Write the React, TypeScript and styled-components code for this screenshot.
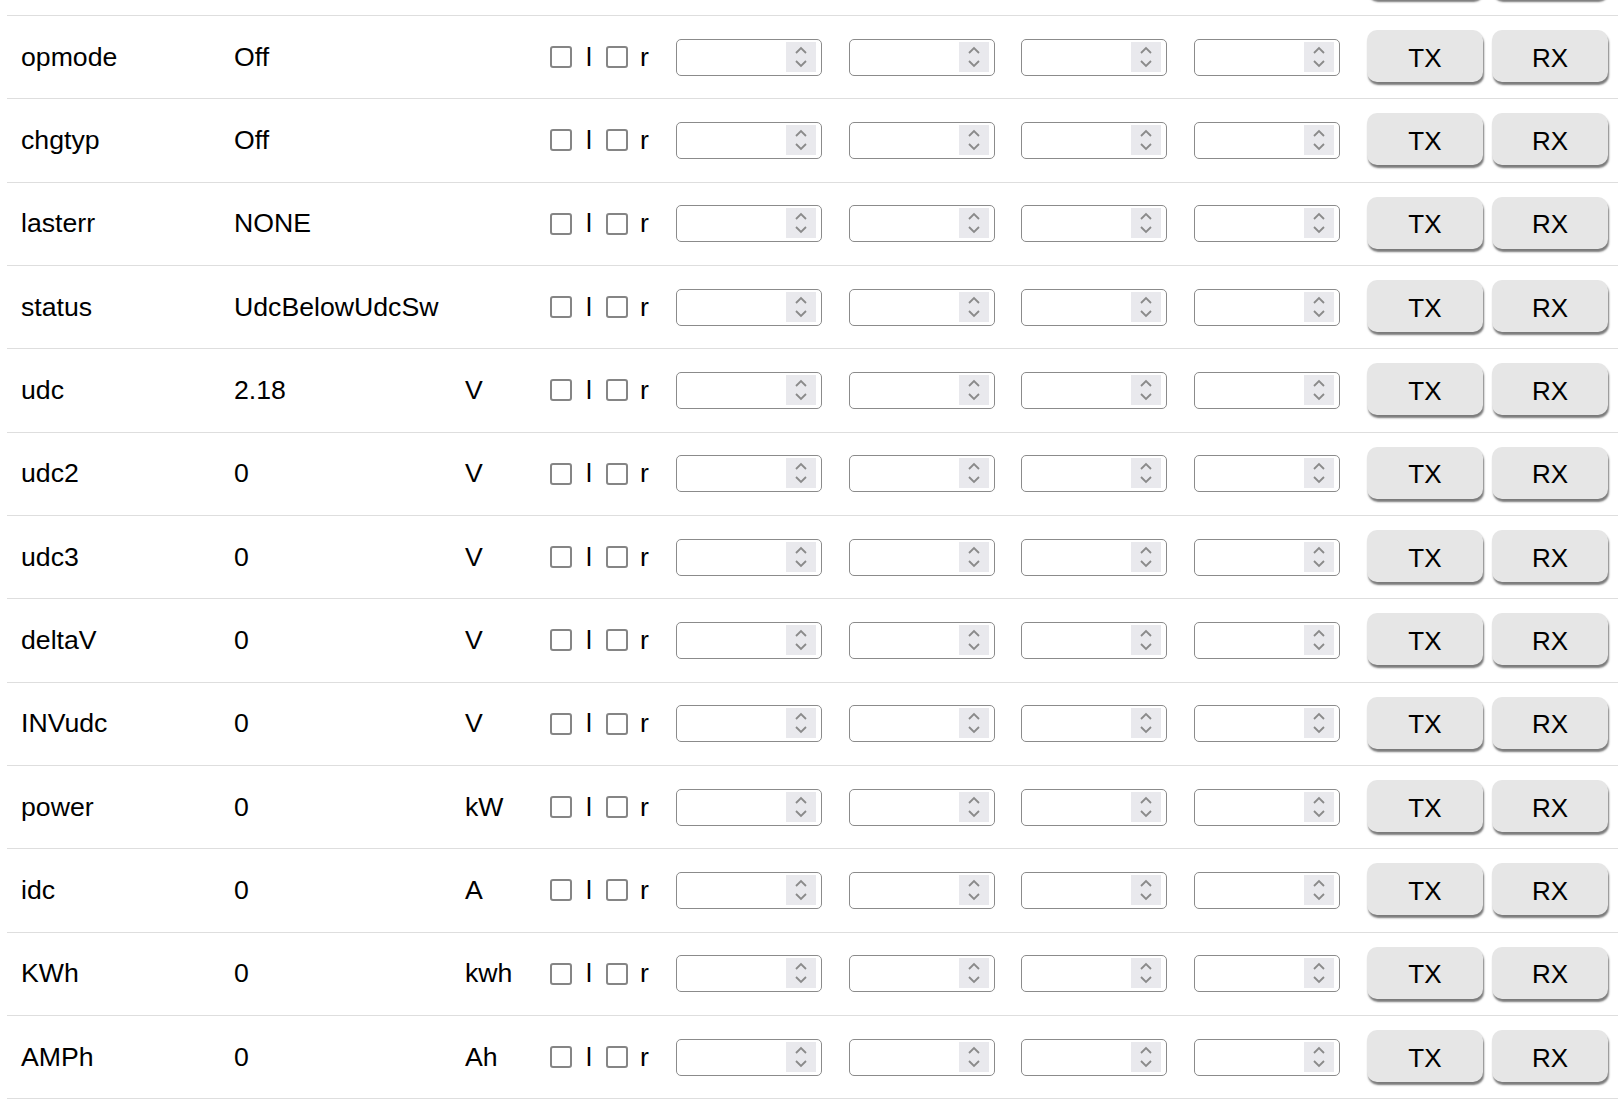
import React from "react"
import styled, { createGlobalStyle } from "styled-components"

const GlobalStyle = createGlobalStyle`
  html, body {
    margin: 0;
    padding: 0;
    background: #fff;
    overflow: hidden;
  }
  body {
    font-family: "Liberation Sans", Arial, sans-serif;
    color: #000;
  }
`

const Page = styled.div`
  margin-top: -67.33px;
  padding-left: 7px;
`

const Row = styled.div`
  display: flex;
  align-items: center;
  box-sizing: border-box;
  height: 83.33px;
  min-width: 1700px;
  padding-left: 14px;
  border-bottom: 1px solid #dedede;
  font-size: 26.67px;
`

const Name = styled.div`
  width: 213px;
  flex: none;
`

const Value = styled.div`
  width: 231px;
  flex: none;
`

const Unit = styled.div`
  width: 85px;
  flex: none;
`

const Flags = styled.label`
  display: flex;
  align-items: center;
  flex: none;
`

const Check = styled.input.attrs({ type: "checkbox" })`
  appearance: none;
  box-sizing: border-box;
  width: 22px;
  height: 22px;
  margin: 0;
  border: 2px solid #858585;
  border-radius: 3px;
  background: #fff;
`

const FlagText = styled.span<{ $width: number; $left: number; $right: number }>`
  display: inline-block;
  width: ${p => p.$width}px;
  margin-left: ${p => p.$left}px;
  margin-right: ${p => p.$right}px;
`

const Fields = styled.div`
  display: flex;
  align-items: center;
  gap: 26.67px;
  margin-left: 27px;
  flex: none;
`

const NumberBox = styled.div`
  display: flex;
  align-items: center;
  box-sizing: border-box;
  width: 146px;
  height: 37px;
  padding: 3px 5px 4px 0;
  border: 1px solid #8b8b8b;
  border-radius: 5px;
  background: #fff;
`

const NumberInput = styled.input`
  flex: 1;
  min-width: 0;
  height: 100%;
  border: none;
  outline: none;
  background: transparent;
  font-size: 22px;
`

const Spinner = styled.span`
  display: flex;
  align-items: center;
  justify-content: center;
  width: 30px;
  height: 30px;
  background: #e9e9ed;
`

const Buttons = styled.div`
  display: flex;
  gap: 9px;
  margin-left: 27px;
  margin-bottom: 2px;
  flex: none;
`

const Button = styled.button`
  width: 116px;
  height: 52px;
  border: none;
  border-radius: 10px;
  background: #e6e6e6;
  box-shadow: 1px 3px 2px rgba(0, 0, 0, 0.52);
  font-family: "Liberation Sans", Arial, sans-serif;
  font-size: 26px;
  color: #000;
  padding: 4px 0 0;
`

const Chevrons = () => (
  <svg width="14" height="26" viewBox="0 0 14 26">
    <path d="M2 9 L7 4 L12 9" fill="none" stroke="#8a8a8a" strokeWidth="1.8" />
    <path d="M2 17 L7 22 L12 17" fill="none" stroke="#8a8a8a" strokeWidth="1.8" />
  </svg>
)

const SpinField = () => (
  <NumberBox>
    <NumberInput type="text" />
    <Spinner>
      <Chevrons />
    </Spinner>
  </NumberBox>
)

type Param = { name: string; value: string; unit: string }

// first entry is scrolled off the top, only its button edges peek in
const params: Param[] = [
  { name: "", value: "", unit: "" },
  { name: "opmode", value: "Off", unit: "" },
  { name: "chgtyp", value: "Off", unit: "" },
  { name: "lasterr", value: "NONE", unit: "" },
  { name: "status", value: "UdcBelowUdcSw", unit: "" },
  { name: "udc", value: "2.18", unit: "V" },
  { name: "udc2", value: "0", unit: "V" },
  { name: "udc3", value: "0", unit: "V" },
  { name: "deltaV", value: "0", unit: "V" },
  { name: "INVudc", value: "0", unit: "V" },
  { name: "power", value: "0", unit: "kW" },
  { name: "idc", value: "0", unit: "A" },
  { name: "KWh", value: "0", unit: "kwh" },
  { name: "AMPh", value: "0", unit: "Ah" },
]

const ParamRow = ({ param }: { param: Param }) => {
  const shown = param.name !== ""
  return (
    <Row>
      <Name>{param.name}</Name>
      <Value>{param.value}</Value>
      <Unit>{param.unit}</Unit>
      <Flags>
        <Check />
        <FlagText $width={6} $left={14} $right={14}>{shown ? "l" : ""}</FlagText>
        <Check />
        <FlagText $width={9} $left={12} $right={0}>{shown ? "r" : ""}</FlagText>
      </Flags>
      <Fields>
        <SpinField />
        <SpinField />
        <SpinField />
        <SpinField />
      </Fields>
      <Buttons>
        <Button>{shown ? "TX" : ""}</Button>
        <Button>{shown ? "RX" : ""}</Button>
      </Buttons>
    </Row>
  )
}

const App = () => {
  return (
    <>
      <GlobalStyle />
      <Page>
        {params.map((p, i) => (
          <ParamRow key={i} param={p} />
        ))}
      </Page>
    </>
  )
}

export default App
